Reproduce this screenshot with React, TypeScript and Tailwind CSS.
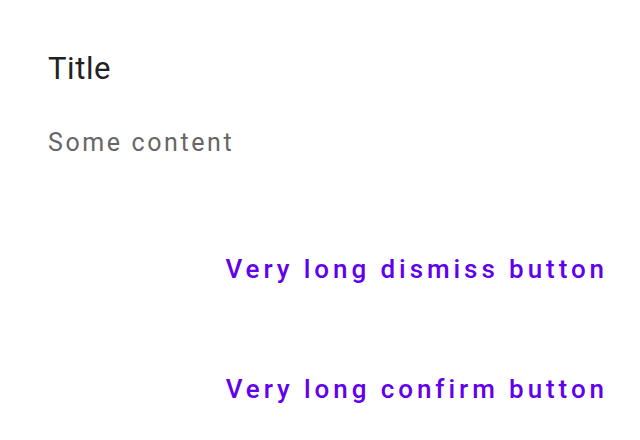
export default function App() {
  return (
    <div className="w-[640px] h-[440px] bg-white overflow-hidden flex flex-col" style={{ fontFamily: 'Roboto, "Noto Sans", sans-serif' }}>
      <div className="pl-[48px] pt-[51px] text-[31px] leading-[36px] tracking-[0.6px] text-[#212121]">Title</div>
      <div className="pl-[48px] mt-[41px] text-[25px] leading-[30px] tracking-[2.6px] text-[#666666]">Some content</div>
      <div className="flex flex-col items-end pr-[32px] mt-[96px] gap-[90px]">
        <div className="text-[26px] leading-[30px] font-medium tracking-[3.93px] text-[#6200ee]">Very long dismiss button</div>
        <div className="text-[26px] leading-[30px] font-medium tracking-[3.93px] text-[#6200ee]">Very long confirm button</div>
      </div>
    </div>
  );
}
